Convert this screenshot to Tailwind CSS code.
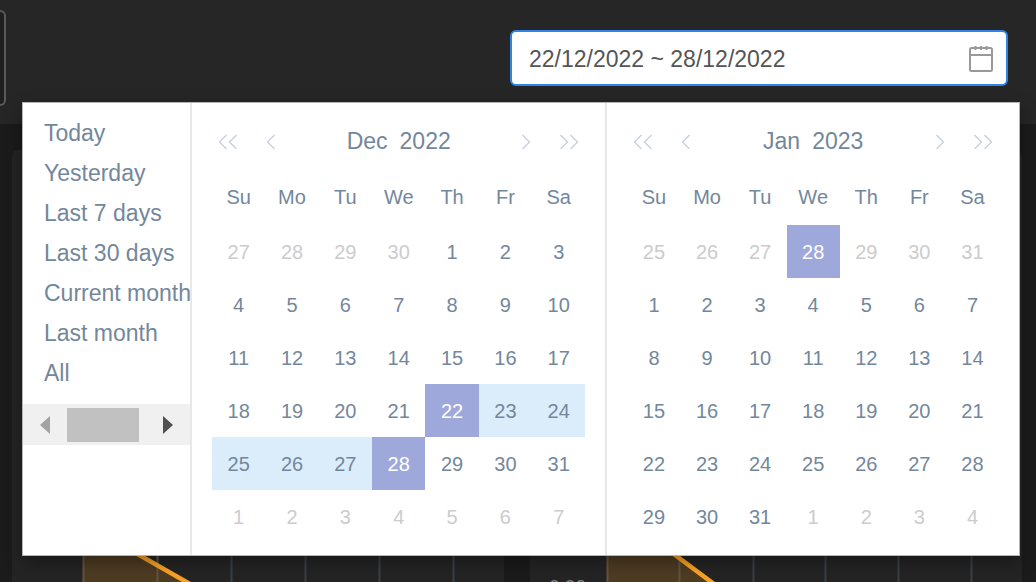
<!DOCTYPE html>
<html lang="en">
<head>
  <meta charset="UTF-8" />
  <meta name="viewport" content="width=device-width, initial-scale=1" />
  <title>Dashboard</title>
  <script src="https://cdn.jsdelivr.net/npm/@tailwindcss/browser@4"></script>
</head>
<body class="h-screen overflow-hidden bg-[#1b1b1b] text-[#73879c] font-['Liberation_Sans',Arial,sans-serif] flex flex-col">
  <header class="relative z-10 h-[124px] shrink-0 bg-[#262626] flex justify-between items-start pr-7">
    <div class="mt-[10px] h-24 w-[6px] bg-[#1f1f1f] border-2 border-l-0 border-[#5a5a5a] rounded-r-md"></div>

    <div class="mt-[30px] w-[498px] h-14 flex items-center bg-white border-2 border-[#3084e8] rounded-md pl-[17px] pr-3">
      <input id="range" type="text" aria-label="Date range" value="22/12/2022 ~ 28/12/2022" class="flex-1 min-w-0 h-full pt-[2px] text-[23px] text-[#555] outline-none" />
      <button type="button" aria-label="Open calendar">
        <svg class="w-[26px] h-7" viewBox="0 0 26 28" fill="none" stroke="#999" stroke-width="2">
          <rect x="2" y="4" width="22" height="23" rx="1.5" />
          <path d="M2 11h22M7.500 2v4M13 2v4M18.500 2v4" />
        </svg>
      </button>
    </div>

    <!-- date picker popup -->
    <div class="absolute top-[102px] left-[22px] right-4 flex bg-white border border-[#b5b5b5] shadow-[0_6px_16px_rgba(0,0,0,0.35)]">
      <div class="w-[169px] shrink-0 overflow-hidden border-r-2 border-[#e8e8e8] pt-[10px]">
        <div id="shortcuts" class="flex flex-col items-start pl-[21px] text-[23px] leading-10 whitespace-nowrap"></div>
        <div class="mt-[11px] h-[41px] bg-[#f0f0f0] flex items-center justify-between px-4">
          <svg class="w-3 h-5" viewBox="0 0 12 20"><path d="M11 1v18L1 10z" fill="#a3a3a3" /></svg>
          <div class="w-[72px] h-[34px] bg-[#c1c1c1] mr-2"></div>
          <svg class="w-3 h-5" viewBox="0 0 12 20"><path d="M1 1v18l10-9z" fill="#505050" /></svg>
        </div>
      </div>
      <div id="dec" class="flex-[414] border-r-2 border-[#e8e8e8] px-5 pt-5 pb-3"></div>
      <div id="jan" class="flex-[412] px-5 pt-5 pb-3"></div>
    </div>
  </header>

  <main class="flex-1 min-h-0 grid grid-cols-2 gap-[26px] pt-[26px] pl-3 pr-[14px]">
    <section class="bg-[#242424] rounded-t-md flex flex-col justify-end">
      <svg class="w-full h-[30px]" viewBox="0 0 492 30" preserveAspectRatio="xMinYMax meet" fill="none">
        <path d="M71 0H121L177 30H71z" fill="#4d3b22" />
        <path d="M71.500 0v30M145.500 0v30" stroke="#62553f" stroke-width="2" />
        <path d="M219.500 0v30M293.500 0v30M367.500 0v30M441.500 0v30" stroke="#3b4046" stroke-width="2" />
        <path d="M122 0L178 32" stroke="#f9a126" stroke-width="4.500" />
      </svg>
    </section>
    <section class="bg-[#242424] rounded-t-md flex flex-col justify-end">
      <svg class="w-full h-[30px]" viewBox="0 0 492 30" preserveAspectRatio="xMinYMax meet" fill="none">
        <path d="M77 0H140L183 30H77z" fill="#4d3b22" />
        <path d="M77.500 0v30M149.500 0v30" stroke="#62553f" stroke-width="2" />
        <path d="M223.500 0v30M295.500 0v30M368.500 0v30M441.500 0v30" stroke="#3b4046" stroke-width="2" />
        <path d="M141 0L184 32" stroke="#f9a126" stroke-width="4.500" />
        <text x="19" y="41" font-size="19" fill="#8a8a8a">0.00</text>
      </svg>
    </section>
  </main>

  <script>
    const shortcuts = ['Today', 'Yesterday', 'Last 7 days', 'Last 30 days', 'Current month', 'Last month', 'All'];
    document.getElementById('shortcuts').innerHTML = shortcuts
      .map(s => `<button type="button" class="text-left hover:text-[#1284e7]">${s}</button>`)
      .join('');

    const styles = {
      other: 'bg-white text-[#ccc]',
      normal: 'bg-white',
      range: 'bg-[#dbedfb]',
      active: 'bg-[#9fa8da] text-white'
    };

    // '<' / '>' icons, doubled for the year buttons
    const icons = {
      prevYear: '<svg class="w-5 h-4" viewBox="0 0 20 16" fill="none" stroke="#c5cfdc" stroke-width="1.300"><path d="M8.500 2L1.500 9l7 7M18.500 2l-7 7 7 7" /></svg>',
      prev: '<svg class="w-[10px] h-4" viewBox="0 0 10 16" fill="none" stroke="#c5cfdc" stroke-width="1.300"><path d="M8.500 2L1.500 9l7 7" /></svg>',
      next: '<svg class="w-[10px] h-4" viewBox="0 0 10 16" fill="none" stroke="#c5cfdc" stroke-width="1.300"><path d="M1.500 2l7 7-7 7" /></svg>',
      nextYear: '<svg class="w-5 h-4" viewBox="0 0 20 16" fill="none" stroke="#c5cfdc" stroke-width="1.300"><path d="M1.500 2l7 7-7 7M11.500 2l7 7-7 7" /></svg>'
    };

    function renderCalendar(id, month, year, before, length, stateOf) {
      const cells = before.map(n => ({ n, state: stateOf(n, false) }));
      for (let n = 1; n <= length; n++) cells.push({ n, state: stateOf(n, true) });
      for (let n = 1; cells.length < 42; n++) cells.push({ n, state: 'other' });

      let rows = '';
      for (let i = 0; i < 42; i += 7) {
        rows += '<tr>' + cells.slice(i, i + 7)
          .map(c => `<td class="h-[53px] p-0 ${styles[c.state]}">${c.n}</td>`)
          .join('') + '</tr>';
      }

      document.getElementById(id).innerHTML = `
        <div class="h-9 flex items-center justify-between px-[6px]">
          <div class="flex gap-7">
            <button type="button" aria-label="Previous year">${icons.prevYear}</button>
            <button type="button" aria-label="Previous month">${icons.prev}</button>
          </div>
          <div class="flex gap-3 text-[23px]">
            <button type="button">${month}</button>
            <button type="button">${year}</button>
          </div>
          <div class="flex gap-7">
            <button type="button" aria-label="Next month">${icons.next}</button>
            <button type="button" aria-label="Next year">${icons.nextYear}</button>
          </div>
        </div>
        <table class="mt-[10px] w-full table-fixed text-center text-xl">
          <thead>
            <tr>${['Su', 'Mo', 'Tu', 'We', 'Th', 'Fr', 'Sa'].map(d => `<th class="h-14 p-0 font-normal">${d}</th>`).join('')}</tr>
          </thead>
          <tbody>${rows}</tbody>
        </table>
      `;
    }

    renderCalendar('dec', 'Dec', 2022, [27, 28, 29, 30], 31, (n, current) => {
      if (!current) return 'other';
      if (n === 22 || n === 28) return 'active';
      return n > 22 && n < 28 ? 'range' : 'normal';
    });
    renderCalendar('jan', 'Jan', 2023, [25, 26, 27, 28, 29, 30, 31], 31, (n, current) => {
      if (current) return 'normal';
      return n === 28 ? 'active' : 'other';
    });
  </script>
</body>
</html>
